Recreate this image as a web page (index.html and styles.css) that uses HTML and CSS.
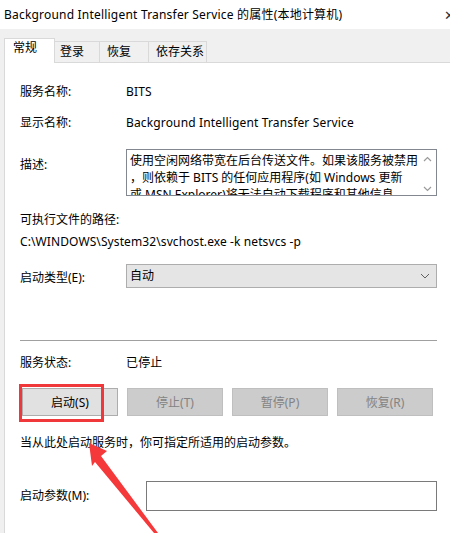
FILE: index.html
```html
<!DOCTYPE html>
<html lang="zh-CN">
<head>
  <meta charset="UTF-8">
  <meta name="viewport" content="width=device-width, initial-scale=1.0">
  <title>BITS 的属性</title>
  <link rel="stylesheet" href="styles.css">
</head>
<body>
  <div id="window">
    <div class="titlebar">
      <span class="title">Background Intelligent Transfer Service 的属性(本地计算机)</span>
      <span class="close">✕</span>
    </div>

    <div class="tabs">
      <div class="tab tab-general active">常规</div>
      <div class="tab tab-logon">登录</div>
      <div class="tab tab-recovery">恢复</div>
      <div class="tab tab-deps">依存关系</div>
    </div>

    <div class="panel">
      <div class="row row-name">
        <span class="label">服务名称:</span>
        <span class="value">BITS</span>
      </div>
      <div class="row row-display">
        <span class="label">显示名称:</span>
        <span class="value">Background Intelligent Transfer Service</span>
      </div>
      <div class="row row-desc">
        <span class="label">描述:</span>
        <div class="desc-box">
          <div class="desc-text">
            <span>使用空闲网络带宽在后台传送文件。如果该服务被禁用</span>
            <span>，则依赖于 BITS 的任何应用程序(如 Windows 更新</span>
            <span>或 MSN Explorer)将无法自动下载程序和其他信息。</span>
          </div>
          <div class="scrollbar">
            <svg width="9" height="6" viewBox="0 0 9 6"><path d="M1 5 L4.5 1.5 L8 5" fill="none" stroke="#9a9a9a" stroke-width="1.2"/></svg>
            <svg width="9" height="6" viewBox="0 0 9 6"><path d="M1 1 L4.5 4.5 L8 1" fill="none" stroke="#9a9a9a" stroke-width="1.2"/></svg>
          </div>
        </div>
      </div>

      <div class="path-label">可执行文件的路径:</div>
      <div class="path-value">C:\WINDOWS\System32\svchost.exe -k netsvcs -p</div>

      <div class="row row-type">
        <span class="label">启动类型(E):</span>
        <div class="select">
          <span>自动</span>
          <svg width="10" height="6" viewBox="0 0 10 6"><path d="M1 1 L5 5 L9 1" fill="none" stroke="#606060" stroke-width="1"/></svg>
        </div>
      </div>

      <div class="separator"></div>

      <div class="row row-status">
        <span class="label">服务状态:</span>
        <span class="value">已停止</span>
      </div>

      <div class="buttons">
        <button class="btn">启动(S)</button>
        <button class="btn" disabled>停止(T)</button>
        <button class="btn" disabled>暂停(P)</button>
        <button class="btn" disabled>恢复(R)</button>
        <div class="highlight"></div>
      </div>

      <div class="hint">当从此处启动服务时，你可指定所适用的启动参数。</div>

      <div class="row row-params">
        <span class="label label-wide">启动参数(M):</span>
        <div class="text-input"></div>
      </div>
    </div>

    <svg class="arrow" width="450" height="533" viewBox="0 0 450 533">
      <polygon points="89,443 107,451 101,456 158,533 154,533 95,462 92,466" fill="#f5383a"/>
    </svg>
  </div>
</body>
</html>
```

FILE: styles.css
```css
body {
  margin: 0;
  font-family: "Noto Sans", "Noto Sans CJK SC", sans-serif;
  font-size: 12px;
  color: #000;
  background: #f0f0f0;
}

#window {
  position: relative;
  width: 450px;
  height: 533px;
  overflow: hidden;
  background: #f0f0f0;
}

.titlebar {
  height: 29px;
  background: #fff;
  display: flex;
  align-items: center;
  padding-left: 4px;
  box-sizing: border-box;
  white-space: nowrap;
}

.title {
  flex: 1;
  padding-bottom: 1px;
  letter-spacing: 0.2px;
}

.close {
  width: 6px;
  overflow: hidden;
  font-size: 13px;
  color: #333;
}

.tabs {
  display: flex;
  align-items: flex-end;
  height: 33px;
  padding-left: 4px;
  box-sizing: border-box;
}

.tab {
  height: 21px;
  line-height: 20px;
  border: 1px solid #d9d9d9;
  border-bottom: none;
  margin-left: -1px;
  padding-left: 7px;
  box-sizing: border-box;
  background: #f0f0f0;
}

.tab.active {
  height: 25px;
  line-height: 17px;
  margin-left: 0;
  margin-bottom: -1px;
  padding-left: 8px;
  background: #fff;
  position: relative;
  z-index: 1;
}

.tab-general { width: 51px; }
.tab-logon { width: 46px; padding-left: 5px; }
.tab-recovery { width: 50px; }
.tab-deps { width: 59px; }

.panel {
  margin-left: 4px;
  height: 480px;
  background: #fff;
  border-left: 1px solid #d9d9d9;
  border-top: 1px solid #d9d9d9;
  padding: 21px 13px 0 15px;
}

.row {
  display: flex;
  align-items: center;
  line-height: 16px;
}

.label {
  width: 106px;
  flex-shrink: 0;
}

.label-wide {
  width: 126px;
}

.value {
  letter-spacing: 0.15px;
}

.row-display {
  margin-top: 15px;
}

.row-desc {
  margin-top: 18px;
  align-items: flex-start;
}

.row-desc .label {
  margin-top: 8px;
}

.desc-box {
  width: 312px;
  height: 47px;
  border: 1px solid #828790;
  box-sizing: border-box;
  display: flex;
  overflow: hidden;
}

.desc-text {
  flex: 1;
  padding: 2px 0 0 3px;
  line-height: 17px;
  white-space: nowrap;
  overflow: hidden;
}

.desc-text span {
  display: block;
}

.scrollbar {
  width: 17px;
  display: flex;
  flex-direction: column;
  justify-content: space-between;
  align-items: center;
  padding: 6px 0 3px;
}

.path-label {
  margin-top: 16px;
  line-height: 16px;
}

.path-value {
  margin-top: 6px;
  line-height: 16px;
  letter-spacing: 0.1px;
}

.row-type {
  margin-top: 14px;
}

.row-type .label {
  padding-top: 3px;
}

.select {
  width: 312px;
  height: 24px;
  border: 1px solid #adadad;
  background: #e5e5e5;
  box-sizing: border-box;
  display: flex;
  align-items: center;
  justify-content: space-between;
  padding: 0 6px 0 3px;
}

.separator {
  margin-top: 52px;
  height: 1px;
  background: #a0a0a0;
}

.row-status {
  margin-top: 14px;
}

.buttons {
  position: relative;
  margin-top: 17px;
  margin-left: 2px;
  display: grid;
  grid-template-columns: repeat(4, 96px);
  column-gap: 9px;
}

.btn {
  height: 28px;
  font-family: inherit;
  font-size: 12px;
  color: #000;
  background: #e1e1e1;
  border: 1px solid #adadad;
  padding: 0;
}

.btn:disabled {
  color: #838383;
  background: #cccccc;
  border-color: #bfbfbf;
}

.highlight {
  position: absolute;
  left: -3px;
  top: -4px;
  width: 85px;
  height: 38px;
  border: 3px solid #f0383b;
  box-sizing: border-box;
}

.hint {
  margin-top: 19px;
  line-height: 16px;
}

.row-params {
  margin-top: 30px;
}

.text-input {
  width: 291px;
  height: 30px;
  border: 1px solid #7a7a7a;
  box-sizing: border-box;
}

.arrow {
  position: absolute;
  left: 0;
  top: 0;
  pointer-events: none;
}
```
